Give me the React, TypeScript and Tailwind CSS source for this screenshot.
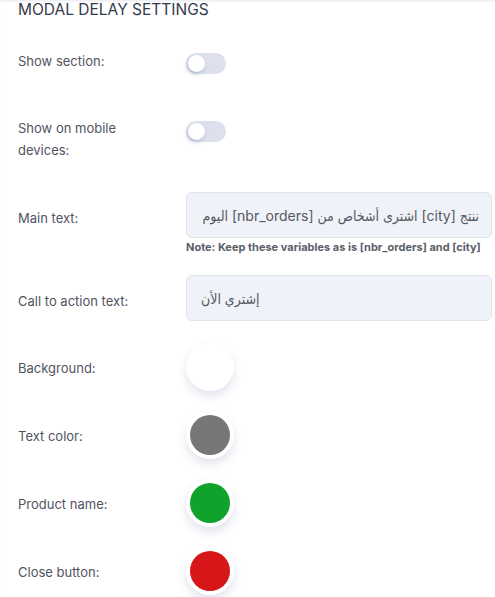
import React from "react";

const font = "font-['Inter','DejaVu_Sans_Condensed','DejaVu_Sans',sans-serif]";
const arabic = "font-['Inter','DejaVu_Sans_Condensed','DejaVu_Sans',sans-serif]";

function Toggle() {
  return (
    <div className="w-[40px] h-[21px] rounded-full bg-[#dde1ee] flex items-center px-[2px] flex-none">
      <div className="w-[17px] h-[17px] rounded-full bg-white shadow-[-1px_2px_4px_rgba(120,130,180,0.45)]" />
    </div>
  );
}

function Swatch({ color }: { color: string }) {
  return (
    <div className="w-[48px] h-[48px] rounded-full bg-white p-[4px] shadow-[0_5px_10px_rgba(110,120,170,0.2)] flex-none">
      <div className={`w-full h-full rounded-full ${color}`} />
    </div>
  );
}

function Label({ children, className = "" }: { children: React.ReactNode; className?: string }) {
  return (
    <div className={`w-[168px] flex-none pr-[40px] text-[13px] leading-[22px] text-[#50545f] ${className}`}>
      {children}
    </div>
  );
}

export default function App() {
  const swatches = [
    { label: "Background:", color: "bg-white" },
    { label: "Text color:", color: "bg-[#777777]" },
    { label: "Product name:", color: "bg-[#10a22a]" },
    { label: "Close button:", color: "bg-[#d61619]" },
  ];
  return (
    <div className={`w-[495px] h-[597px] bg-white overflow-hidden pl-[18px] shadow-[inset_0_3px_3px_-2px_rgba(120,130,160,0.18)] ${font}`}>
      <h2 className="text-[15.5px] leading-[20px] text-[#353a4b]">MODAL DELAY SETTINGS</h2>

      <div className="flex items-center mt-[30px]">
        <Label className="mb-[5px]">Show section:</Label>
        <Toggle />
      </div>

      <div className="flex items-start mt-[40px]">
        <Label>Show on mobile devices:</Label>
        <div className="mt-[4px]">
          <Toggle />
        </div>
      </div>

      <div className="flex items-start mt-[31px]">
        <Label className="mt-[15px]">Main text:</Label>
        <div className="flex flex-col w-[306px]">
          <div
            dir="rtl"
            className={`h-[46px] rounded-[6px] border border-[#dfe3ec] bg-[#eff2f8] flex items-center px-[12px] whitespace-nowrap overflow-hidden text-[14px] text-[#55585f] ${arabic}`}
          >
            ننتج [city] اشترى أشخاص من [nbr_orders] اليوم
          </div>
          <div className="mt-[1px] text-[11px] leading-[16px] font-bold text-[#5a5e69] whitespace-nowrap">
            Note: Keep these variables as is [nbr_orders] and [city]
          </div>
        </div>
      </div>

      <div className="flex items-center mt-[20px]">
        <Label className="mt-[5px]">Call to action text:</Label>
        <div className={`w-[306px] h-[46px] rounded-[6px] border border-[#dfe3ec] bg-[#eff2f8] flex items-center px-[14px] text-[14px] text-[#55585f] ${arabic}`}>
          إشتري الأن
        </div>
      </div>

      <div className="flex flex-col gap-[20px] mt-[22px]">
        {swatches.map((s) => (
          <div key={s.label} className="flex items-center">
            <Label className="mt-[2px]">{s.label}</Label>
            <Swatch color={s.color} />
          </div>
        ))}
      </div>
    </div>
  );
}
